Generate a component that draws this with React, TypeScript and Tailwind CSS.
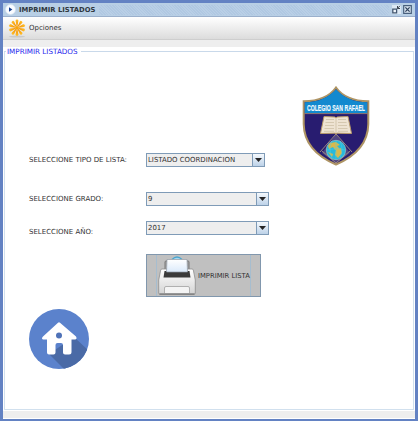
import React from 'react';

function TitleBar() {
  return (
    <header className="flex h-[14px] shrink-0 items-center border-b border-[#9bb0cc] bg-[#b8cfe5] pl-[2px] pr-[3px]">
      <svg className="h-[11px] w-[11px] shrink-0" viewBox="0 0 11 11">
        <circle cx="5.5" cy="5.5" r="5" fill="#fafcff" stroke="#d5e2f1" strokeWidth=".7" />
        <path d="M4 3.2 7.4 5.5 4 7.8Z" fill="#173f91" />
      </svg>
      <h1 className="ml-[3px] w-[78px] shrink-0 whitespace-nowrap text-[6.8px] font-bold leading-[12px] text-[#303840]">IMPRIMIR LISTADOS</h1>
      <div className="ml-[2px] h-[10px] grow bg-[repeating-linear-gradient(45deg,#b0c8e2_0px,#b0c8e2_1px,#b9cfe6_1px,#b9cfe6_2px)]" />
      <svg className="ml-[3px] h-[11px] w-[20px] shrink-0" viewBox="0 0 20 11">
        <path d="M0 1h9v9H0z" fill="#dce8f4" />
        <path d="M.8 5.2h3.8v3.6H.8z" fill="#f3f7fc" stroke="#42566f" strokeWidth="1.3" />
        <path d="M5.3 4.5 8 1.8M5.5 2v2.5H8" fill="none" stroke="#39424e" strokeWidth="1" />
        <path d="M11.7 1.7h7.6v7.6h-7.6z" fill="#dae6f2" stroke="#485f7c" strokeWidth="1.2" />
        <path d="m13.4 3.4 4.2 4.2m0-4.2-4.2 4.2" stroke="#30435d" strokeWidth="1.3" />
      </svg>
    </header>
  );
}

function OptionsIcon() {
  const rays = [0, 36, 72, 108, 144, 180, 216, 252, 288, 324];
  return (
    <svg className="h-[19px] w-[18px] shrink-0" viewBox="0 0 18 19">
      <defs>
        <linearGradient id="ray" x2="0" y2="1">
          <stop stopColor="#ffbe2a" />
          <stop offset="1" stopColor="#f39000" />
        </linearGradient>
      </defs>
      <ellipse cx="9" cy="17.6" rx="8" ry="1" fill="#c9c9c9" />
      {rays.map((angle) => (
        <path key={angle} d="M8.6 7.3 7.6 2Q7.500.6 9 .6t1.400 1.400L9.400 7.300Z" fill="url(#ray)" transform={`rotate(${angle} 9 8.8)`} />
      ))}
      <circle cx="9" cy="8.8" r="1.8" fill="#f9a50b" />
    </svg>
  );
}

function Crest() {
  return (
    <svg className="ml-[297px] h-[80px] w-[68px] shrink-0 overflow-visible" viewBox="0 0 68 80">
      <path d="M34 1.5C40 10 50 15 66.3 15.3V38C66 57 54 70 34 78.5 14 70 2 57 1.7 38V15.3C18 15 28 10 34 1.5Z" fill="#281c70" stroke="#ae9464" strokeWidth="2" />
      <path d="M34 3.2C41 11 51 16 65.2 16.3V27H2.8V16.3C17 16 27 11 34 3.2Z" fill="#1289cf" />
      <path d="M2.7 27.6h62.6" stroke="#a99676" strokeWidth=".8" />
      <text x="34" y="25.3" textAnchor="middle" textLength="58" lengthAdjust="spacingAndGlyphs" fill="#f1fbff" stroke="#f1fbff" strokeWidth=".2" fontFamily="Liberation Sans, sans-serif" fontWeight="bold" fontSize="9.5">COLEGIO SAN RAFAEL</text>
      <path d="m22 30.5 11 .5 1 1 1-1 11-.5 3.500 17-14.500-.3-1 .5-1-.5-14.500.3Z" fill="#eee3d2" stroke="#b89967" strokeWidth="1" />
      <path d="M34 32v15M24 33.5h8M23.5 36.5H32M23 39.5h9M22.5 42.5H32M22 45.3h10M36 33.5h8M36 36.5h8.500M36 39.5h9M36 42.5h9.500M36 45.3h10" fill="none" stroke="#c5b698" strokeWidth=".6" />
      <path d="M34 48 20 67 34 77 48 67Z" fill="#6f668f" opacity=".55" />
      <path d="m34 48-16 18M34 48l16 18M20 65l14 12M48 65 34 77" stroke="#a69481" strokeWidth=".9" />
      <circle cx="34" cy="64" r="9.7" fill="#27b9dc" stroke="#a7d3ce" strokeWidth=".6" />
      <path d="m28 57 6-1 4 3-3 1 3 3-5 1-2-3-4 2-1-3ZM34 64l5-2 1 5-4 5-3-3ZM26 66l5 2-1 3Z" fill="#d9b94b" />
      <path d="M34 55v18M25 64q9-3 18 0M30 55q-4 8 0 17M38 55q4 8 0 17" fill="none" stroke="#55cce2" strokeWidth=".5" />
    </svg>
  );
}

function Combo({ value, wide = false }: { value: string; wide?: boolean }) {
  return (
    <div className={`flex h-[14px] shrink-0 border border-[#7f9bb7] bg-[#eeeeee] ${wide ? 'w-[123px]' : 'w-[119px]'}`}>
      <span className="grow whitespace-nowrap pl-[1px] text-[6.95px] leading-[12px]">{value}</span>
      <span className="flex w-[12px] shrink-0 items-center justify-center border-l border-[#7f9bb7] bg-linear-to-b from-[#f5f9fd] to-[#bdd2e8]">
        <svg className="h-[4px] w-[7px]" viewBox="0 0 7 4"><path d="M0 0h7L3.5 4Z" fill="#252525" /></svg>
      </span>
    </div>
  );
}

function Printer() {
  return (
    <svg className="h-[40px] w-[38px] shrink-0" viewBox="0 0 38 40">
      <defs>
        <linearGradient id="body" x2="0" y2="1"><stop stopColor="#fff" /><stop offset="1" stopColor="#d4d4d4" /></linearGradient>
        <linearGradient id="paper" x2="0" y2="1"><stop stopColor="#fff" /><stop offset="1" stopColor="#dbeafa" /></linearGradient>
      </defs>
      <path d="M14 3.5q5-5 10 0" fill="#a7d9ef" stroke="#4aa6d0" strokeWidth="1.2" />
      <path d="M7 14V6q0-1 1-1h3M31 14V6q0-1-1-1h-3" fill="#a6a6a6" stroke="#777" strokeWidth="1" />
      <path d="M4 13h30q1 0 1.300 1l2 10v13q0 1-1 1H1.700q-1 0-1-1V24l2-10Q3 13 4 13Z" fill="url(#body)" stroke="#8d8d8d" strokeWidth=".8" />
      <path d="M6.500 15h25l1 6.500h-27Z" fill="#3a3a3a" />
      <path d="M9 3.500h20l.5 12.500h-21Z" fill="url(#paper)" stroke="#909aa4" strokeWidth=".7" />
      <path d="M6.500 37v-5q0-1.500 1.500-1.500h22q1.500 0 1.500 1.500v5" fill="#f4f4f4" stroke="#b0b0b0" strokeWidth="1" />
      <path d="M1.500 38.200h35" stroke="#777" strokeWidth="1.200" />
    </svg>
  );
}

function HomeIcon() {
  return (
    <svg className="ml-[23px] mt-[11px] h-[62px] w-[62px] shrink-0" viewBox="0 0 62 62">
      <defs><clipPath id="disc"><circle cx="31" cy="31" r="30" /></clipPath></defs>
      <circle cx="31" cy="31" r="30" fill="#5b82cc" />
      <path clipPath="url(#disc)" d="M46 29 62 44v18H37L21 46Z" fill="#4a6aa6" />
      <path d="M30 14.700Q31 14 32 14.700L48 28.500q1.500 2.500-1 3H43.500V44q0 2.500-2.500 2.500H37q-2 0-2-2V37q0-2-2-2h-3.500q-2 0-2 2v7.500q0 2-2 2H21q-2 0-2-2V31.500h-4q-2-1 0-3Z" fill="#fff" />
      <circle cx="31" cy="27.500" r="3" fill="#4f72b8" />
    </svg>
  );
}

export default function App() {
  return (
    <main className="flex h-[421px] w-[418px] flex-col overflow-hidden border-[3px] border-b-[2px] border-[#6382c3] bg-[#eeeeee] font-['DejaVu_Sans',sans-serif] text-[7px] text-[#333]">
      <TitleBar />
      <nav className="flex h-[23px] shrink-0 items-center border-b border-[#cecece] bg-linear-to-b from-white to-[#dcdcdc] pl-[5px]">
        <OptionsIcon />
        <span className="ml-[3px] leading-[12px]">Opciones</span>
      </nav>
      <div className="h-[7px] shrink-0" />
      <section className="flex min-h-0 grow flex-col bg-white px-px pb-px">
        <div className="flex h-[9px] shrink-0 items-center">
          <span className="h-px w-[2px] bg-[#c9d9ea]" />
          <h2 className="w-[75px] whitespace-nowrap pl-[1px] text-[7.2px] leading-[8px] text-[#2929ed]">IMPRIMIR LISTADOS</h2>
          <span className="h-px grow bg-[#c9d9ea]" />
        </div>
        <div className="-mt-[4px] flex min-h-0 grow flex-col border-x border-b border-[#d1e0ee] pt-[34px]">
          <Crest />
          <div className="ml-[24px] -mt-[13px] flex h-[14px] shrink-0 items-center"><label className="w-[117px] shrink-0">SELECCIONE TIPO DE LISTA:</label><Combo value="LISTADO COORDINACION" /></div>
          <div className="ml-[24px] mt-[25px] flex h-[14px] shrink-0 items-center"><label className="w-[117px] shrink-0">SELECCIONE GRADO:</label><Combo value="9" wide /></div>
          <div className="ml-[24px] mt-[15px] flex h-[14px] shrink-0 items-center"><label className="w-[117px] shrink-0 pt-[8px]">SELECCIONE AÑO:</label><Combo value="2017" wide /></div>
          <button className="ml-[141px] mt-[19px] flex h-[43px] w-[115px] shrink-0 justify-center border border-[#8197ad] bg-[#c0c0c0]">
            <span className="flex h-[41px] w-[95px] items-center border-x border-[#a6bdcf] pl-[1px]"><Printer /><span className="ml-[2px] whitespace-nowrap pt-px text-[6.8px]">IMPRIMIR LISTA</span></span>
          </button>
          <HomeIcon />
        </div>
      </section>
      <footer className="h-[8px] shrink-0 border-b border-white bg-[#eeeeee]" />
    </main>
  );
}
